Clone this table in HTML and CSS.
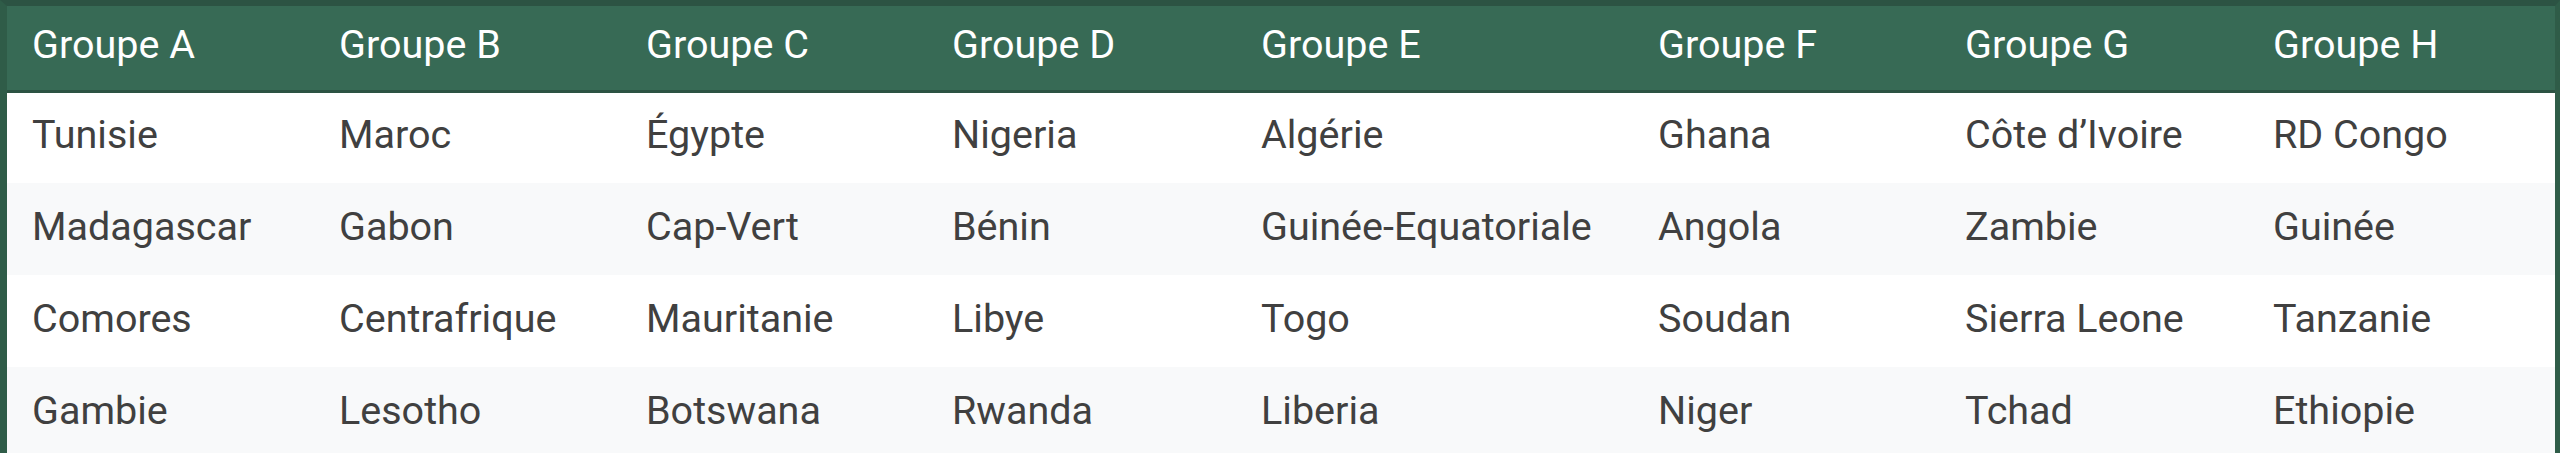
FILE: index.html
```html
<!DOCTYPE html>
<html lang="fr">
<head>
<meta charset="utf-8">
<title>Groupes</title>
<link rel="stylesheet" href="styles.css">
</head>
<body>
<div class="frame">
<table class="groups">
<colgroup>
<col class="c-a"><col class="c-b"><col class="c-c"><col class="c-d"><col class="c-e"><col class="c-f"><col class="c-g"><col class="c-h">
</colgroup>
<thead>
<tr><th>Groupe A</th><th>Groupe B</th><th>Groupe C</th><th>Groupe D</th><th>Groupe E</th><th>Groupe F</th><th>Groupe G</th><th>Groupe H</th></tr>
</thead>
<tbody>
<tr><td>Tunisie</td><td>Maroc</td><td>Égypte</td><td>Nigeria</td><td>Algérie</td><td>Ghana</td><td>Côte d’Ivoire</td><td>RD Congo</td></tr>
<tr><td>Madagascar</td><td>Gabon</td><td>Cap-Vert</td><td>Bénin</td><td>Guinée-Equatoriale</td><td>Angola</td><td>Zambie</td><td>Guinée</td></tr>
<tr><td>Comores</td><td>Centrafrique</td><td>Mauritanie</td><td>Libye</td><td>Togo</td><td>Soudan</td><td>Sierra Leone</td><td>Tanzanie</td></tr>
<tr><td>Gambie</td><td>Lesotho</td><td>Botswana</td><td>Rwanda</td><td>Liberia</td><td>Niger</td><td>Tchad</td><td>Ethiopie</td></tr>
</tbody>
</table>
</div>
</body>
</html>
```
FILE: styles.css
```css
html, body {
  margin: 0;
  padding: 0;
  background: #ffffff;
}
body {
  font-family: Roboto, "Noto Sans", sans-serif;
  overflow: hidden;
}
.frame {
  border-top: 6px solid #2c5343;
  border-left: 7px solid #2f5c48;
  border-right: 5px solid #2f5c48;
  background: #ffffff;
}
.groups {
  width: 100%;
  border-collapse: collapse;
  table-layout: fixed;
}
.c-a { width: 307px; }
.c-b { width: 307px; }
.c-c { width: 306px; }
.c-d { width: 309px; }
.c-e { width: 397px; }
.c-f { width: 307px; }
.c-g { width: 308px; }
.c-h { width: auto; }
.groups th {
  background: #376a55;
  color: #ffffff;
  font-weight: 400;
  font-size: 39.5px;
  text-align: left;
  height: 85px;
  padding: 0 0 6px 25px;
  border-bottom: 3px solid #2c5343;
  box-sizing: border-box;
}
.groups td {
  color: #404040;
  font-size: 39.5px;
  height: 92px;
  padding: 0 0 6px 25px;
  white-space: nowrap;
  box-sizing: border-box;
}
.groups tbody tr:nth-child(even) td {
  background: #f8f9fa;
}
```
